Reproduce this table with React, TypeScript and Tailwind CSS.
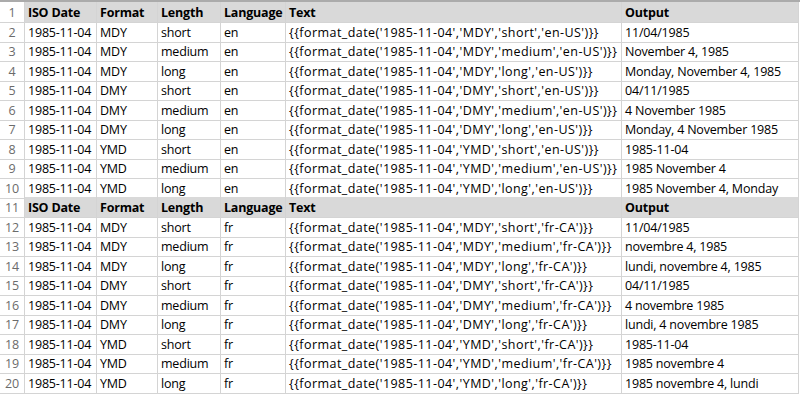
const cols = "grid grid-cols-[25px_72px_61px_63px_65px_336px_177px]";

type Row = { d: string; f: string; l: string; lang: string; loc: string; out: string };

const en: Row[] = [
  { d: "1985-11-04", f: "MDY", l: "short", lang: "en", loc: "en-US", out: "11/04/1985" },
  { d: "1985-11-04", f: "MDY", l: "medium", lang: "en", loc: "en-US", out: "November 4, 1985" },
  { d: "1985-11-04", f: "MDY", l: "long", lang: "en", loc: "en-US", out: "Monday, November 4, 1985" },
  { d: "1985-11-04", f: "DMY", l: "short", lang: "en", loc: "en-US", out: "04/11/1985" },
  { d: "1985-11-04", f: "DMY", l: "medium", lang: "en", loc: "en-US", out: "4 November 1985" },
  { d: "1985-11-04", f: "DMY", l: "long", lang: "en", loc: "en-US", out: "Monday, 4 November 1985" },
  { d: "1985-11-04", f: "YMD", l: "short", lang: "en", loc: "en-US", out: "1985-11-04" },
  { d: "1985-11-04", f: "YMD", l: "medium", lang: "en", loc: "en-US", out: "1985 November 4" },
  { d: "1985-11-04", f: "YMD", l: "long", lang: "en", loc: "en-US", out: "1985 November 4, Monday" },
];

const fr: Row[] = [
  { d: "1985-11-04", f: "MDY", l: "short", lang: "fr", loc: "fr-CA", out: "11/04/1985" },
  { d: "1985-11-04", f: "MDY", l: "medium", lang: "fr", loc: "fr-CA", out: "novembre 4, 1985" },
  { d: "1985-11-04", f: "MDY", l: "long", lang: "fr", loc: "fr-CA", out: "lundi, novembre 4, 1985" },
  { d: "1985-11-04", f: "DMY", l: "short", lang: "fr", loc: "fr-CA", out: "04/11/1985" },
  { d: "1985-11-04", f: "DMY", l: "medium", lang: "fr", loc: "fr-CA", out: "4 novembre 1985" },
  { d: "1985-11-04", f: "DMY", l: "long", lang: "fr", loc: "fr-CA", out: "lundi, 4 novembre 1985" },
  { d: "1985-11-04", f: "YMD", l: "short", lang: "fr", loc: "fr-CA", out: "1985-11-04" },
  { d: "1985-11-04", f: "YMD", l: "medium", lang: "fr", loc: "fr-CA", out: "1985 novembre 4" },
  { d: "1985-11-04", f: "YMD", l: "long", lang: "fr", loc: "fr-CA", out: "1985 novembre 4, lundi" },
];

const cell = "border-r border-b border-[#d4d4d4] pl-[3px] whitespace-nowrap overflow-hidden leading-[19px] pt-[1px]";

function Num({ n }: { n: number }) {
  return (
    <div className="border-r border-b border-[#d4d4d4] text-center text-[#6b6b6b] leading-[19px] pt-[1px]">
      {n}
    </div>
  );
}

function Header({ n, h }: { n: number; h: string }) {
  return (
    <div className={`${cols} ${h}`}>
      <Num n={n} />
      {["ISO Date", "Format", "Length", "Language", "Text", "Output"].map((t) => (
        <div key={t} className={`${cell} bg-[#d9d9d9] font-bold`}>
          {t}
        </div>
      ))}
    </div>
  );
}

function DataRow({ n, r, h }: { n: number; r: Row; h: string }) {
  const text = `{{format_date('${r.d}','${r.f}','${r.l}','${r.loc}')}}`;
  return (
    <div className={`${cols} ${h}`}>
      <Num n={n} />
      <div className={cell}>{r.d}</div>
      <div className={cell}>{r.f}</div>
      <div className={cell}>{r.l}</div>
      <div className={cell}>{r.lang}</div>
      <div className={`${cell} tracking-[0.45px]`}>{text}</div>
      <div className={cell}>{r.out}</div>
    </div>
  );
}

export default function App() {
  return (
    <div className="w-[800px] h-[394px] overflow-hidden bg-white border-t-2 border-[#ababab] text-[12.5px] tracking-[-0.2px] text-black font-['Open_Sans',Arial,sans-serif]">
      <Header n={1} h="h-[20px]" />
      {en.map((r, i) => (
        <DataRow key={`e${i}`} n={i + 2} r={r} h={i % 2 === 0 ? "h-[19px]" : "h-[20px]"} />
      ))}
      <Header n={11} h="h-[20px]" />
      {fr.map((r, i) => (
        <DataRow key={`f${i}`} n={i + 12} r={r} h={i % 2 === 0 ? "h-[19px]" : "h-[20px]"} />
      ))}
    </div>
  );
}
